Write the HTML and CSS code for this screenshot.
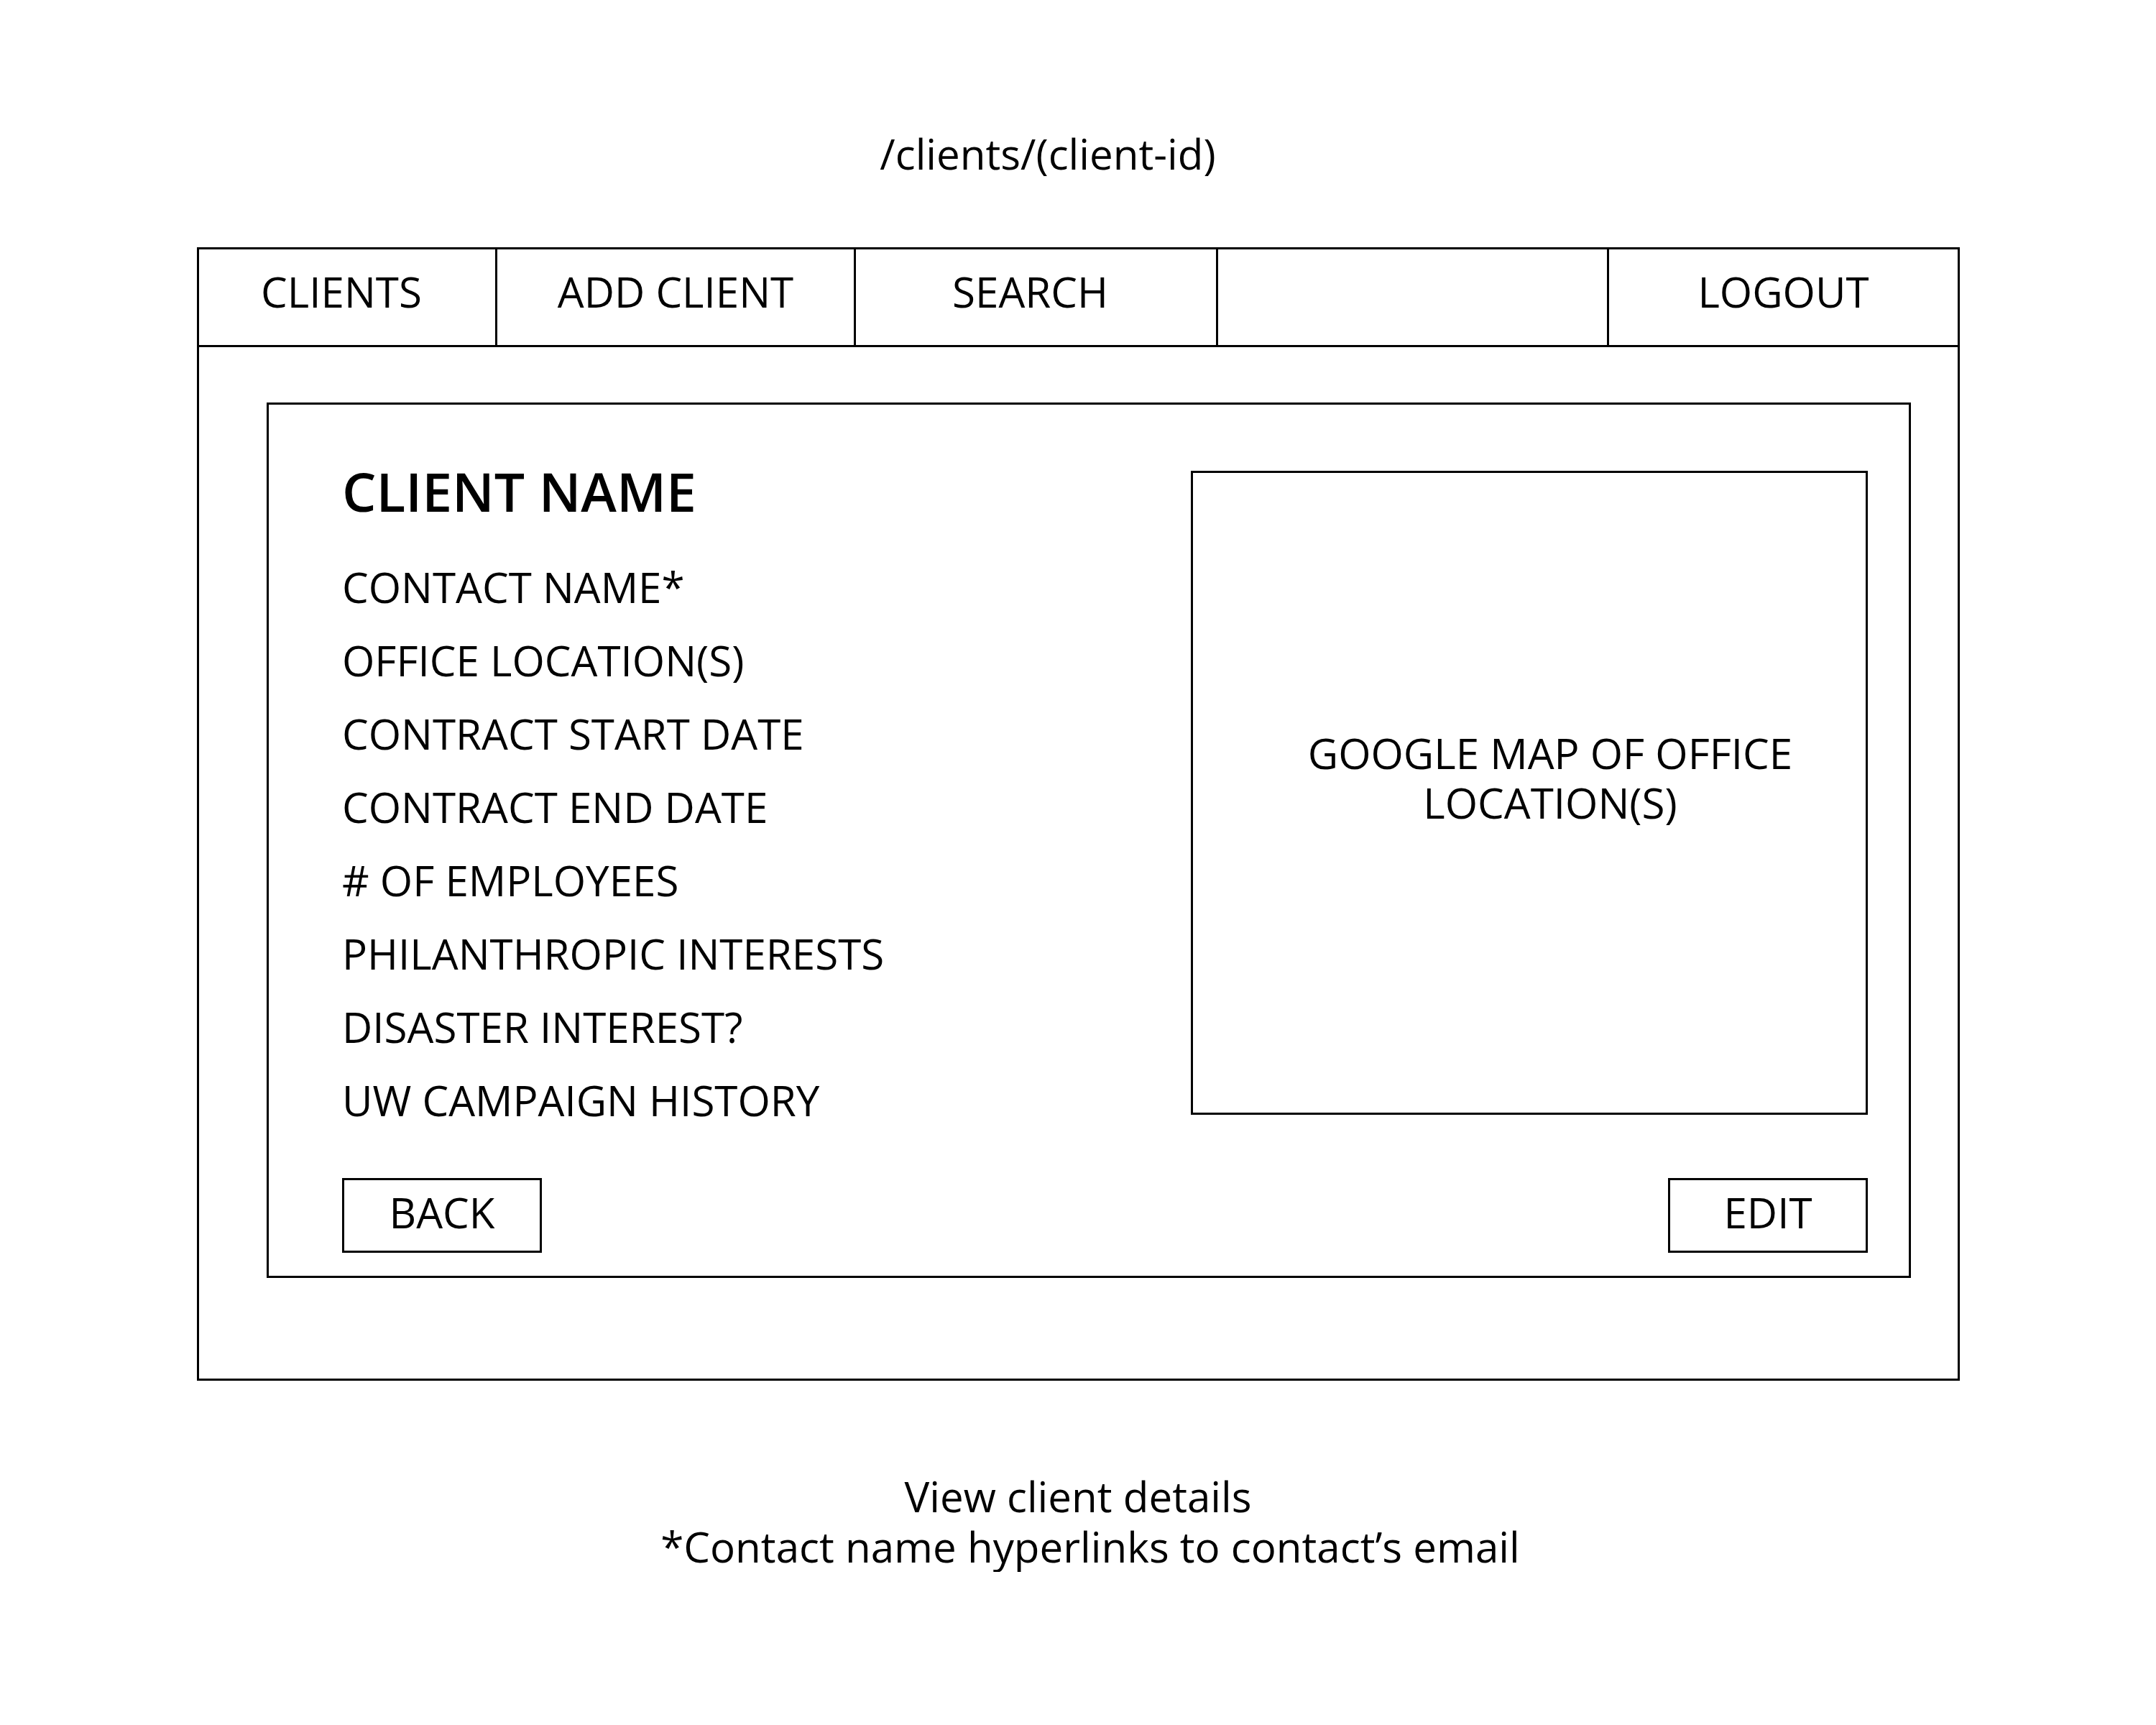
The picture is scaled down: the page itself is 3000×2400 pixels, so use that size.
FILE: index.html
```html
<!DOCTYPE html>
<html lang="en">
<head>
    <meta charset="UTF-8">
    <title>Client details - wireframe</title>
    <link rel="stylesheet" href="styles.css">
</head>
<body>
    <div class="page">
        <div class="route">/clients/(client-id)</div>

        <div class="frame">
            <!-- Top navigation -->
            <nav class="nav">
                <div class="nav-item nudge">CLIENTS</div>
                <div class="nav-item">ADD CLIENT</div>
                <div class="nav-item nudge">SEARCH</div>
                <div class="nav-item"></div>
                <div class="nav-item">LOGOUT</div>
            </nav>

            <div class="frame-body">
                <div class="card">
                    <div class="card-top">
                        <div class="details">
                            <h1 class="client-name">CLIENT NAME</h1>
                            <ul class="fields">
                                <li>CONTACT NAME*</li>
                                <li>OFFICE LOCATION(S)</li>
                                <li>CONTRACT START DATE</li>
                                <li>CONTRACT END DATE</li>
                                <li># OF EMPLOYEES</li>
                                <li>PHILANTHROPIC INTERESTS</li>
                                <li>DISASTER INTEREST?</li>
                                <li>UW CAMPAIGN HISTORY</li>
                            </ul>
                        </div>
                        <div class="map">
                            <span>GOOGLE MAP OF OFFICE<br>LOCATION(S)</span>
                        </div>
                    </div>

                    <div class="card-actions">
                        <div class="btn">BACK</div>
                        <div class="btn">EDIT</div>
                    </div>
                </div>
            </div>
        </div>

        <div class="caption">
            <div>View client details</div>
            <div class="note">*Contact name hyperlinks to contact’s email</div>
        </div>
    </div>
</body>
</html>
```

FILE: styles.css
```css
/* Wireframe basics */
body {
    margin: 0;
    background: #fff;
    color: #000;
    font-family: 'Open Sans', 'Noto Sans', sans-serif;
    font-size: 58.3px;
}

.page {
    width: 3000px;
    padding-top: 180px;
}

.route {
    text-align: center;
    line-height: 68px;
    padding-right: 84px;
    margin-bottom: 96px;
}

/* Outer window */
.frame {
    box-sizing: border-box;
    width: 2453px;
    height: 1577px;
    margin-left: 274px;
    border: 3px solid #000;
}

.nav {
    display: grid;
    grid-template-columns: 415px 499px 504px 544px 1fr;
    height: 133px;
    border-bottom: 3px solid #000;
}

.nav-item {
    display: flex;
    align-items: center;
    justify-content: center;
    padding-bottom: 16px;
    border-right: 3px solid #000;
}

.nav-item.nudge {
    padding-right: 16px;
}

.nav-item:last-child {
    border-right: none;
}

.frame-body {
    padding: 77px 65px 0 94px;
}

/* Client card */
.card {
    box-sizing: border-box;
    height: 1218px;
    border: 3px solid #000;
    padding: 92px 57px 32px 102px;
    display: flex;
    flex-direction: column;
}

.card-top {
    display: flex;
    justify-content: space-between;
    align-items: flex-start;
}

.client-name {
    margin: 0;
    font-size: 75px;
    font-weight: 600;
    line-height: 56px;
}

.fields {
    list-style: none;
    margin: 71px 0 0;
    padding: 0;
    display: flex;
    flex-direction: column;
    gap: 32px;
}

.fields li {
    line-height: 70px;
}

.map {
    box-sizing: border-box;
    width: 942px;
    height: 896px;
    border: 3px solid #000;
    display: flex;
    align-items: center;
    justify-content: center;
    text-align: center;
    line-height: 69px;
    padding: 0 0 42px 58px;
}

.card-actions {
    margin-top: auto;
    display: flex;
    justify-content: space-between;
}

.btn {
    box-sizing: border-box;
    width: 278px;
    height: 104px;
    border: 3px solid #000;
    display: flex;
    align-items: center;
    justify-content: center;
    padding-bottom: 10px;
}

.caption {
    text-align: center;
    line-height: 70px;
    margin-top: 126px;
}

.caption .note {
    padding-left: 34px;
}
```
